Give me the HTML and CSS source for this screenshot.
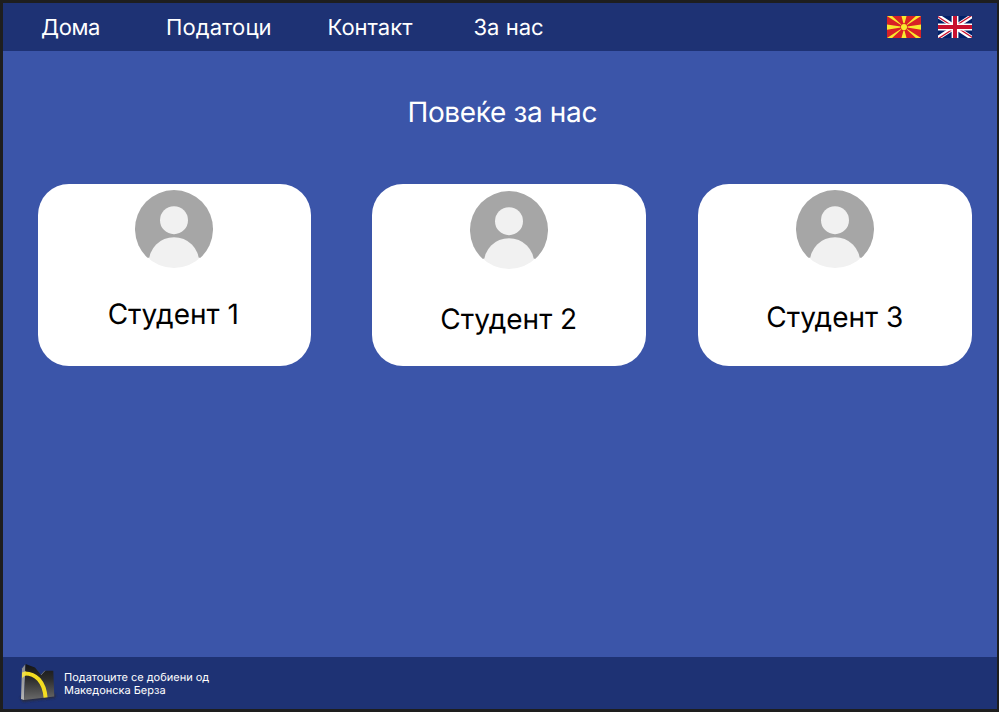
FILE: index.html
```html
<!DOCTYPE html>
<html lang="mk">
<head>
<meta charset="utf-8">
<title>Повеќе за нас</title>
<link rel="stylesheet" href="styles.css">
</head>
<body>
<svg class="defs" aria-hidden="true">
  <symbol id="avatar" viewBox="0 0 78 78">
    <clipPath id="disc"><circle cx="39" cy="39" r="39"/></clipPath>
    <path d="M12.5 67.7A39 39 0 1 1 65.5 67.7Z" fill="#a6a6a6"/>
    <circle cx="39" cy="30.2" r="14" fill="#f1f1f1"/>
    <circle cx="39" cy="72.4" r="25.2" fill="#f1f1f1" clip-path="url(#disc)"/>
  </symbol>
</svg>
<div class="page">
  <header class="header">
    <nav class="nav">
      <a class="home">Дома</a>
      <a class="data">Податоци</a>
      <a class="contact">Контакт</a>
      <a class="about">За нас</a>
    </nav>
    <div class="flags">
      <svg class="flag" viewBox="0 0 280 176" preserveAspectRatio="none">
        <rect width="280" height="176" fill="#d82126"/>
        <path fill="#f8e92e" d="M0 0H42L140 88ZM280 0H238L140 88ZM0 176H42L140 88ZM280 176H238L140 88ZM119 0H161L140 75ZM119 176H161L140 101ZM0 67V109L140 88ZM280 67V109L140 88Z"/>
        <circle cx="140" cy="88" r="30" fill="#d82126"/>
        <circle cx="140" cy="88" r="25" fill="#f8e92e"/>
      </svg>
      <svg class="flag" viewBox="0 0 60 38" preserveAspectRatio="none">
        <clipPath id="quarters"><path d="M30 19H60V38ZM30 19V38H0ZM30 19H0V0ZM30 19V0H60Z"/></clipPath>
        <rect width="60" height="38" fill="#012169"/>
        <path d="M0 0L60 38M60 0L0 38" stroke="#fff" stroke-width="7.5"/>
        <path d="M0 0L60 38M60 0L0 38" stroke="#c8102e" stroke-width="4.5" clip-path="url(#quarters)"/>
        <path d="M30 0V38M0 19H60" stroke="#fff" stroke-width="12"/>
        <path d="M30 0V38M0 19H60" stroke="#c8102e" stroke-width="7"/>
      </svg>
    </div>
  </header>
  <main class="main">
    <h1 class="title">Повеќе за нас</h1>
    <div class="cards">
      <article class="card first">
        <svg class="avatar"><use href="#avatar"/></svg>
        <h2 class="name">Студент 1</h2>
      </article>
      <article class="card second">
        <svg class="avatar"><use href="#avatar"/></svg>
        <h2 class="name">Студент 2</h2>
      </article>
      <article class="card third">
        <svg class="avatar"><use href="#avatar"/></svg>
        <h2 class="name">Студент 3</h2>
      </article>
    </div>
  </main>
  <footer class="footer">
    <svg class="logo" viewBox="0 0 44 46">
      <defs>
        <linearGradient id="face" x1="0" y1="0" x2="0" y2="1">
          <stop offset="0" stop-color="#151515"/>
          <stop offset=".4" stop-color="#2b2b2b"/>
          <stop offset="1" stop-color="#6a6a6a"/>
        </linearGradient>
        <linearGradient id="side" x1="0" y1="0" x2="0" y2="1">
          <stop offset="0" stop-color="#888"/>
          <stop offset="1" stop-color="#b5b5b5"/>
        </linearGradient>
        <filter id="soft" x="-20%" y="-20%" width="140%" height="140%"><feGaussianBlur stdDeviation="1.2"/></filter>
        <clipPath id="block"><path d="M9.5 4L19 7.5L25 15L29 10.7H37.3L38.3 36.5L8 40Z"/></clipPath>
      </defs>
      <path d="M4 37L40 34L39 38L7 42Z" fill="#282c40" filter="url(#soft)"/>
      <path d="M9.5 4L6 8.5L5 39L8 40Z" fill="url(#side)"/>
      <path d="M9.5 4L19 7.5L25 15L29 10.7H37.3L38.3 36.5L8 40Z" fill="url(#face)"/>
      <path d="M25 15L29 10.7" fill="none" stroke="#888" stroke-width=".7"/>
      <path d="M7 13.5C20 12.5 28.5 22 29.7 38.5" fill="none" stroke="#f4dd20" stroke-width="4" clip-path="url(#block)"/>
      <path d="M6 12.5L9.8 11.2V15.3L6 18Z" fill="#f0df4a"/>
    </svg>
    <p class="source">Податоците се добиени од<br>Македонска Берза</p>
  </footer>
</div>
</body>
</html>
```

FILE: styles.css
```css
* {
  box-sizing: border-box;
}

body {
  margin: 0;
  background: #1e1e1e;
  font-family: Inter, "Liberation Sans", sans-serif;
  text-rendering: geometricPrecision;
}

.defs {
  position: absolute;
  width: 0;
  height: 0;
}

.page {
  display: flex;
  flex-direction: column;
  height: 712px;
  padding: 3px 2px 3px 3px;
}

.header {
  display: flex;
  align-items: center;
  justify-content: space-between;
  height: 48px;
  padding: 0 25px 0 38px;
  background: #1e3274;
}

.nav {
  display: flex;
  padding-top: 1px;
  color: #fff;
  font-size: 22px;
  line-height: 48px;
  white-space: nowrap;
}

.home {
  width: 125px;
  letter-spacing: -0.4px;
}

.data {
  width: 161.5px;
  letter-spacing: 0.1px;
}

.contact {
  width: 146px;
}

.flags {
  display: flex;
  gap: 17px;
}

.flag {
  width: 34px;
  height: 22px;
}

.main {
  flex: 1;
  padding: 41px 25px 0 34.5px;
  background: #3b55a9;
}

.title {
  margin: 0 0 52px;
  padding-right: 5px;
  color: #fff;
  font-size: 28px;
  font-weight: 400;
  letter-spacing: -0.35px;
  line-height: 40px;
  text-align: center;
}

.cards {
  display: flex;
}

.card {
  display: flex;
  flex-direction: column;
  align-items: center;
  width: 273.5px;
  height: 181.5px;
  padding-top: 6px;
  border-radius: 31px;
  background: #fff;
}

.second {
  margin-left: 61px;
  padding-top: 7px;
}

.third {
  margin-left: 52.5px;
}

.avatar {
  display: block;
  width: 78px;
  height: 78px;
  overflow: visible;
}

.name {
  margin: 26px 0 0;
  color: #000;
  font-size: 28px;
  font-weight: 400;
  line-height: 40px;
}

.first .name {
  padding-right: 2px;
}

.second .name {
  margin-top: 30px;
}

.third .name {
  margin-top: 29px;
}

.footer {
  display: flex;
  align-items: center;
  height: 52px;
  padding-left: 13px;
  background: #1e3274;
}

.logo {
  width: 44px;
  height: 46px;
}

.source {
  margin: 0 0 0 4px;
  padding-top: 2px;
  color: #fff;
  font-size: 11px;
  line-height: 13px;
}
```
